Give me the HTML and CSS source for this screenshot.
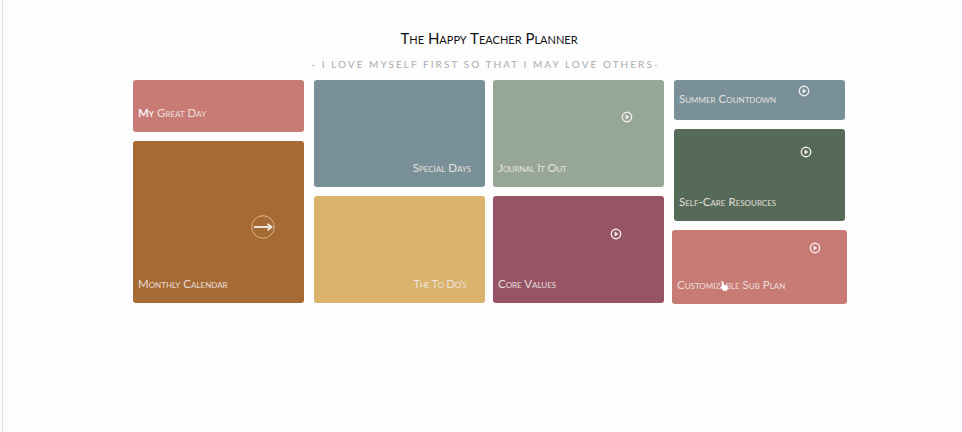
FILE: index.html
```html
<!DOCTYPE html>
<html lang="en">
	<head>
		<meta charset="utf-8">
		<title>The Happy Teacher Planner</title>
		<link rel="stylesheet" href="styles.css">
	</head>
	<body>
		<!--Page frame-->
		<div class="page">
			<div class="planner">
				<!--Planner heading-->
				<h1 class="title">The Happy Teacher Planner</h1>
				<p class="motto">- I love myself first so that I may love others-</p>
				<!--Tiles-->
				<div class="board">
					<div class="column">
						<a class="tile rose great-day"><span class="label"><b>My</b> Great Day</span></a>
						<a class="tile brown calendar">
							<svg class="arrow-icon" viewBox="0 0 24 24" width="24" height="24">
								<circle cx="12" cy="12" r="11.3" fill="none" stroke="#d9b48e" stroke-width="1"/>
								<path d="M3 12H20.500M16.500 8.800L20.500 12L16.500 15.200" fill="none" stroke="#ebe4dc" stroke-width="1.900"/>
							</svg>
							<span class="label">Monthly Calendar</span>
						</a>
					</div>
					<div class="column">
						<a class="tile slate half end"><span class="label">Special Days</span></a>
						<a class="tile gold half end todo"><span class="label">The To Do's</span></a>
					</div>
					<div class="column narrow-gap">
						<a class="tile sage half">
							<svg class="play-icon play-journal" viewBox="0 0 12 12" width="12" height="12"><use href="#play"/></svg>
							<span class="label journal">Journal It Out</span>
						</a>
						<a class="tile maroon half">
							<svg class="play-icon play-core" viewBox="0 0 12 12" width="12" height="12"><use href="#play"/></svg>
							<span class="label">Core Values</span>
						</a>
					</div>
					<div class="column">
						<a class="tile slate summer">
							<svg class="play-icon play-summer" viewBox="0 0 12 12" width="12" height="12"><use href="#play"/></svg>
							<span class="label">Summer Countdown</span>
						</a>
						<a class="tile forest self-care">
							<svg class="play-icon play-care" viewBox="0 0 12 12" width="12" height="12"><use href="#play"/></svg>
							<span class="label">Self-Care Resources</span>
						</a>
						<a class="tile rose sub-plan">
							<svg class="play-icon play-sub" viewBox="0 0 12 12" width="12" height="12"><use href="#play"/></svg>
							<span class="label">Customizable Sub Plan</span>
							<!--Mouse pointer-->
							<svg class="pointer" viewBox="0 0 10 12" width="10" height="12">
								<path d="M2.500 1.200C3.300.6 4 1 4.200 2L4.600 4.400L7.600 5.400C8.800 5.900 9 7 8.700 8.200L8 10.800H4.300L1.600 7.600C1.100 7 1.700 6.200 2.500 6.600L3.200 7Z" fill="#fff"/>
							</svg>
						</a>
					</div>
				</div>
			</div>
		</div>
		<!--Shared play icon-->
		<svg class="defs" width="0" height="0">
			<symbol id="play" viewBox="0 0 12 12">
				<circle cx="6" cy="6" r="4.700" fill="none" stroke="#f3eeee" stroke-width="1.400"/>
				<path d="M4.600 3.600L8.400 6L4.600 8.400Z" fill="#f3eeee"/>
			</symbol>
		</svg>
	</body>
</html>
```
FILE: styles.css
```css
/*Basic body design*/
body {
	background-color: #fdfdfd;
	font-family: "Lato", "Open Sans", sans-serif;
	margin: 0;
}

/*Page frame with its thin left line*/
div.page {
	border-left: 1px solid #dedede;
	box-sizing: border-box;
	margin-left: 2px;
	height: 432px;
	padding: 29px 0 0 130px;
}

div.planner {
	width: 712px;
}

/*Heading*/
h1.title {
	font-variant: small-caps;
	text-align: center;
	line-height: 18px;
	font-weight: 400;
	font-size: 15px;
	color: #111;
	margin: 0;
}

p.motto {
	text-transform: uppercase;
	letter-spacing: 2.050px;
	text-align: center;
	line-height: 16px;
	margin: 9px 7px 8px 0;
	font-size: 10px;
	color: #a9abad;
}

/*Tile columns*/
div.board {
	display: flex;
	gap: 10px;
}

div.column {
	flex-direction: column;
	display: flex;
	width: 171px;
	gap: 9px;
}

div.column.narrow-gap {
	margin-left: -2px;
}

/*Tile design pattern*/
a.tile {
	justify-content: flex-end;
	flex-direction: column;
	box-sizing: border-box;
	padding: 0 5px 12px;
	border-radius: 3px;
	position: relative;
	display: flex;
	color: #f0e9e6;
}

a.tile.end {
	align-items: flex-end;
	padding-right: 14px;
}

a.tile.todo {
	padding-right: 19px;
}

a.tile.todo span.label {
	letter-spacing: -0.500px;
}

span.label {
	font-variant: small-caps;
	line-height: 14px;
	font-size: 11.500px;
	opacity: 0.9;
}

span.label.journal {
	letter-spacing: -0.200px;
}

span.label b {
	color: #fff;
}

/*Tile colours*/
a.rose { background-color: #c87a74; }
a.brown { background-color: #a66a34; }
a.slate { background-color: #7a9098; }
a.gold { background-color: #dab26c; }
a.sage { background-color: #96a797; }
a.maroon { background-color: #975465; }
a.forest { background-color: #566a58; }

/*Tile sizes*/
a.great-day { height: 52px; }
a.calendar { height: 162px; }
a.half { height: 107px; }
a.summer { height: 40px; padding-bottom: 14px; }
a.self-care { height: 92px; }

/*Tile under the mouse*/
a.sub-plan {
	margin: 0 -2px;
	height: 74px;
}

/*Icons over the tiles*/
svg.arrow-icon, svg.play-icon, svg.pointer {
	position: absolute;
}

svg.defs {
	position: absolute;
}

svg.arrow-icon { left: 118px; top: 74px; }
svg.play-journal { left: 128px; top: 31px; }
svg.play-core { left: 117px; top: 32px; }
svg.play-summer { left: 124px; top: 5px; }
svg.play-care { left: 126px; top: 17px; }
svg.play-sub { left: 137px; top: 12px; }
svg.pointer { left: 47px; top: 50px; }
```
